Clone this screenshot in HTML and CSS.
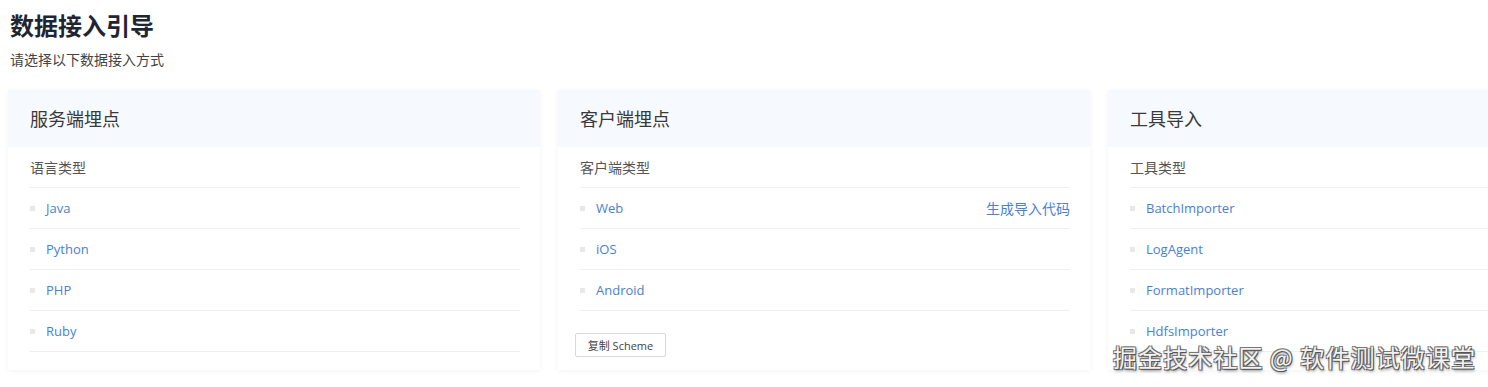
FILE: index.html
```html
<!DOCTYPE html>
<html lang="zh">
<head>
<meta charset="utf-8">
<title>数据接入引导</title>
<link rel="stylesheet" href="styles.css">
</head>
<body>
<div class="page">
  <h1 class="title">数据接入引导</h1>
  <p class="subtitle">请选择以下数据接入方式</p>
  <div class="cards">
    <section class="card">
      <header class="card-head">服务端埋点</header>
      <div class="card-body">
        <div class="label">语言类型</div>
        <ul class="list">
          <li class="item"><span class="dot"></span><a class="link">Java</a></li>
          <li class="item"><span class="dot"></span><a class="link">Python</a></li>
          <li class="item"><span class="dot"></span><a class="link">PHP</a></li>
          <li class="item"><span class="dot"></span><a class="link">Ruby</a></li>
        </ul>
      </div>
    </section>
    <section class="card">
      <header class="card-head">客户端埋点</header>
      <div class="card-body">
        <div class="label">客户端类型</div>
        <ul class="list">
          <li class="item"><span class="dot"></span><a class="link">Web</a><a class="link action">生成导入代码</a></li>
          <li class="item"><span class="dot"></span><a class="link">iOS</a></li>
          <li class="item"><span class="dot"></span><a class="link">Android</a></li>
        </ul>
        <div class="footer"><button class="btn">复制 Scheme</button></div>
      </div>
    </section>
    <section class="card">
      <header class="card-head">工具导入</header>
      <div class="card-body">
        <div class="label">工具类型</div>
        <ul class="list">
          <li class="item"><span class="dot"></span><a class="link">BatchImporter</a></li>
          <li class="item"><span class="dot"></span><a class="link">LogAgent</a></li>
          <li class="item"><span class="dot"></span><a class="link">FormatImporter</a></li>
          <li class="item"><span class="dot"></span><a class="link">HdfsImporter</a></li>
        </ul>
      </div>
    </section>
  </div>
</div>
<div class="watermark">掘金技术社区 @ 软件测试微课堂</div>
</body>
</html>
```
FILE: styles.css
```css
* { box-sizing: border-box; }
html, body { margin: 0; padding: 0; }
body {
  width: 1488px;
  height: 387px;
  overflow: hidden;
  background: #fff;
  font-family: "Open Sans", "Noto Sans CJK SC", sans-serif;
  color: #333;
  position: relative;
}
.page { padding: 9px 0 0 8px; }
.title {
  margin: 0 0 0 2px;
  font-family: "Noto Sans CJK SC", sans-serif;
  font-size: 24px;
  line-height: 32px;
  font-weight: 700;
  color: #1f2633;
}
.subtitle {
  margin: 9px 0 0 2px;
  font-family: "Noto Sans CJK SC", sans-serif;
  font-size: 14px;
  line-height: 18px;
  color: #444;
}
.cards {
  display: flex;
  gap: 18px;
  margin-top: 22px;
}
.card {
  flex: 0 0 532px;
  background: #fff;
  box-shadow: 0 1px 6px rgba(0,0,0,0.05);
  padding-bottom: 13px;
}
.card-head {
  height: 57px;
  line-height: 57px;
  padding-left: 22px;
  background: #f6f9fd;
  font-family: "Noto Sans CJK SC", sans-serif;
  font-size: 18px;
  color: #3a3a3a;
}
.card-body { padding: 0 20px 0 22px; }
.label {
  height: 41px;
  line-height: 40px;
  border-bottom: 1px solid #eef0f2;
  font-family: "Noto Sans CJK SC", sans-serif;
  font-size: 14px;
  color: #555;
}
.list { list-style: none; margin: 0; padding: 0; }
.item {
  display: flex;
  align-items: center;
  height: 41px;
  border-bottom: 1px solid #eef0f2;
}
.dot {
  width: 5px;
  height: 5px;
  background: #e8e8e8;
  margin: 0 11px 0 0;
  flex: 0 0 auto;
}
.link {
  color: #4a7fd4;
  font-size: 13px;
  font-family: "Open Sans", "Noto Sans CJK SC", sans-serif;
}
.action {
  margin-left: auto;
  font-size: 14px;
  font-family: "Noto Sans CJK SC", sans-serif;
}
.footer { padding-top: 22px; margin-left: -5px; }
.btn {
  display: block;
  height: 24px;
  width: 91px;
  padding: 0;
  background: #fff;
  border: 1px solid #d6d9dd;
  border-radius: 2px;
  font-family: "Open Sans", "Noto Sans CJK SC", sans-serif;
  font-size: 11px;
  color: #444;
}
.watermark {
  position: absolute;
  left: 1113px;
  top: 340px;
  font-family: "Noto Sans CJK SC", sans-serif;
  font-size: 24px;
  line-height: 34px;
  letter-spacing: 1.1px;
  color: #f2f2f2;
  text-shadow: 1px 1px 0 #555, -1px -1px 0 #777, 1px -1px 0 #777, -1px 1px 0 #777, 1px 2px 3px rgba(0,0,0,0.5);
  white-space: nowrap;
}
```
